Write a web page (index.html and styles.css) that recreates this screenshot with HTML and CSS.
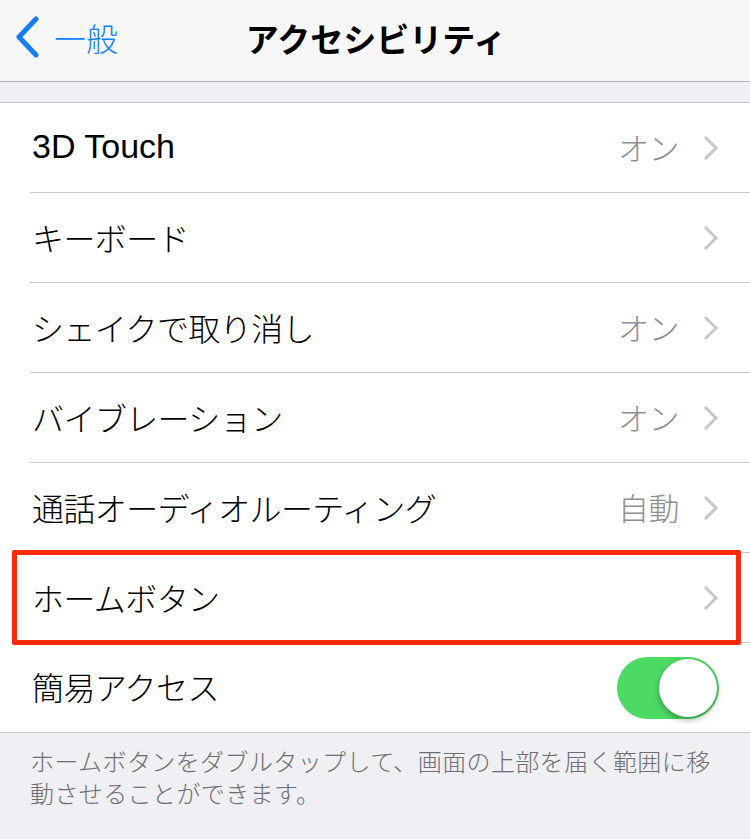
FILE: index.html
```html
<!DOCTYPE html>
<html lang="ja">
  <head>
    <meta charset="UTF-8" />
    <title>アクセシビリティ</title>
    <link rel="stylesheet" href="styles.css">
  </head>
  <body>
    <div class="nav-bar">
      <div class="nav-back">
        <svg class="back-chevron" width="26" height="42" viewBox="0 0 26 42">
          <path d="M22 3 L5 21 L22 39" fill="none" stroke="#157efb" stroke-width="5" stroke-linecap="round" stroke-linejoin="round" />
        </svg>
        <span>一般</span>
      </div>
      <h1>アクセシビリティ</h1>
    </div>

    <div class="group">
      <div class="row">
        <span class="label latin">3D Touch</span>
        <span class="value">オン</span>
        <svg class="chevron" width="16" height="26" viewBox="0 0 16 26"><path d="M2 2 L13 13 L2 24" /></svg>
      </div>
      <div class="row">
        <span class="label">キーボード</span>
        <svg class="chevron" width="16" height="26" viewBox="0 0 16 26"><path d="M2 2 L13 13 L2 24" /></svg>
      </div>
      <div class="row">
        <span class="label">シェイクで取り消し</span>
        <span class="value">オン</span>
        <svg class="chevron" width="16" height="26" viewBox="0 0 16 26"><path d="M2 2 L13 13 L2 24" /></svg>
      </div>
      <div class="row">
        <span class="label">バイブレーション</span>
        <span class="value">オン</span>
        <svg class="chevron" width="16" height="26" viewBox="0 0 16 26"><path d="M2 2 L13 13 L2 24" /></svg>
      </div>
      <div class="row">
        <span class="label">通話オーディオルーティング</span>
        <span class="value">自動</span>
        <svg class="chevron" width="16" height="26" viewBox="0 0 16 26"><path d="M2 2 L13 13 L2 24" /></svg>
      </div>
      <div class="row highlighted">
        <span class="label">ホームボタン</span>
        <svg class="chevron" width="16" height="26" viewBox="0 0 16 26"><path d="M2 2 L13 13 L2 24" /></svg>
      </div>
      <div class="row">
        <span class="label">簡易アクセス</span>
        <span class="toggle"><span class="knob"></span></span>
      </div>
    </div>

    <p class="footer">ホームボタンをダブルタップして、画面の上部を届く範囲に移動させることができます。</p>
  </body>
</html>
```

FILE: styles.css
```css
* {
  margin: 0;
  padding: 0;
  box-sizing: border-box;
}

body {
  width: 750px;
  height: 839px;
  overflow: hidden;
  background-color: #efeff4;
  font-family: "Liberation Sans", "Noto Sans CJK JP", sans-serif;
  font-weight: 300;
  color: #000;
}

.nav-bar {
  position: relative;
  display: flex;
  align-items: center;
  justify-content: center;
  height: 82px;
  background-color: #f7f7f8;
  border-bottom: 1px solid #b2b2b2;
}

.nav-bar h1 {
  font-size: 33px;
  font-weight: bold;
  margin-left: 2px;
  margin-top: -5px;
}

.nav-back {
  position: absolute;
  left: 14px;
  top: 14px;
  display: flex;
  align-items: center;
  gap: 14px;
  color: #157efb;
  font-size: 32px;
}

.back-chevron {
  display: block;
}

.group {
  margin-top: 20px;
  background-color: #fff;
  border-top: 1px solid #c8c7cc;
  border-bottom: 1px solid #c8c7cc;
}

.row {
  position: relative;
  display: flex;
  align-items: center;
  height: 90px;
  padding: 0 31px 3px 32px;
}

.row:not(:last-child)::after {
  content: "";
  position: absolute;
  left: 30px;
  right: 0;
  bottom: 0;
  border-bottom: 1px solid #c8c7cc;
}

.row:last-child {
  height: 89px;
}

.label {
  flex: 1;
  font-size: 32px;
  letter-spacing: -0.6px;
}

.latin {
  font-size: 34px;
  letter-spacing: 0;
}

.value {
  font-size: 31px;
  color: #8e8e93;
  margin-right: 24px;
  letter-spacing: -0.5px;
}

.chevron {
  display: block;
  fill: none;
  stroke: #c7c7cc;
  stroke-width: 3;
  margin-top: 3px;
}

.highlighted::before {
  content: "";
  position: absolute;
  left: 12px;
  right: 9px;
  top: -3px;
  bottom: -2px;
  border: 5px solid #fb2a0d;
  border-radius: 2px;
  z-index: 1;
}

.toggle {
  position: relative;
  width: 102px;
  height: 62px;
  margin-top: 3px;
  border-radius: 31px;
  background-color: #4cd964;
}

.knob {
  position: absolute;
  right: 2px;
  top: 2px;
  width: 58px;
  height: 58px;
  border-radius: 50%;
  background-color: #fff;
  box-shadow: 0 3px 6px rgba(0, 0, 0, 0.3);
}

.footer {
  padding: 14px 30px 0 30px;
  font-size: 24px;
  line-height: 32px;
  color: #6d6d72;
  letter-spacing: 0.4px;
}
```
